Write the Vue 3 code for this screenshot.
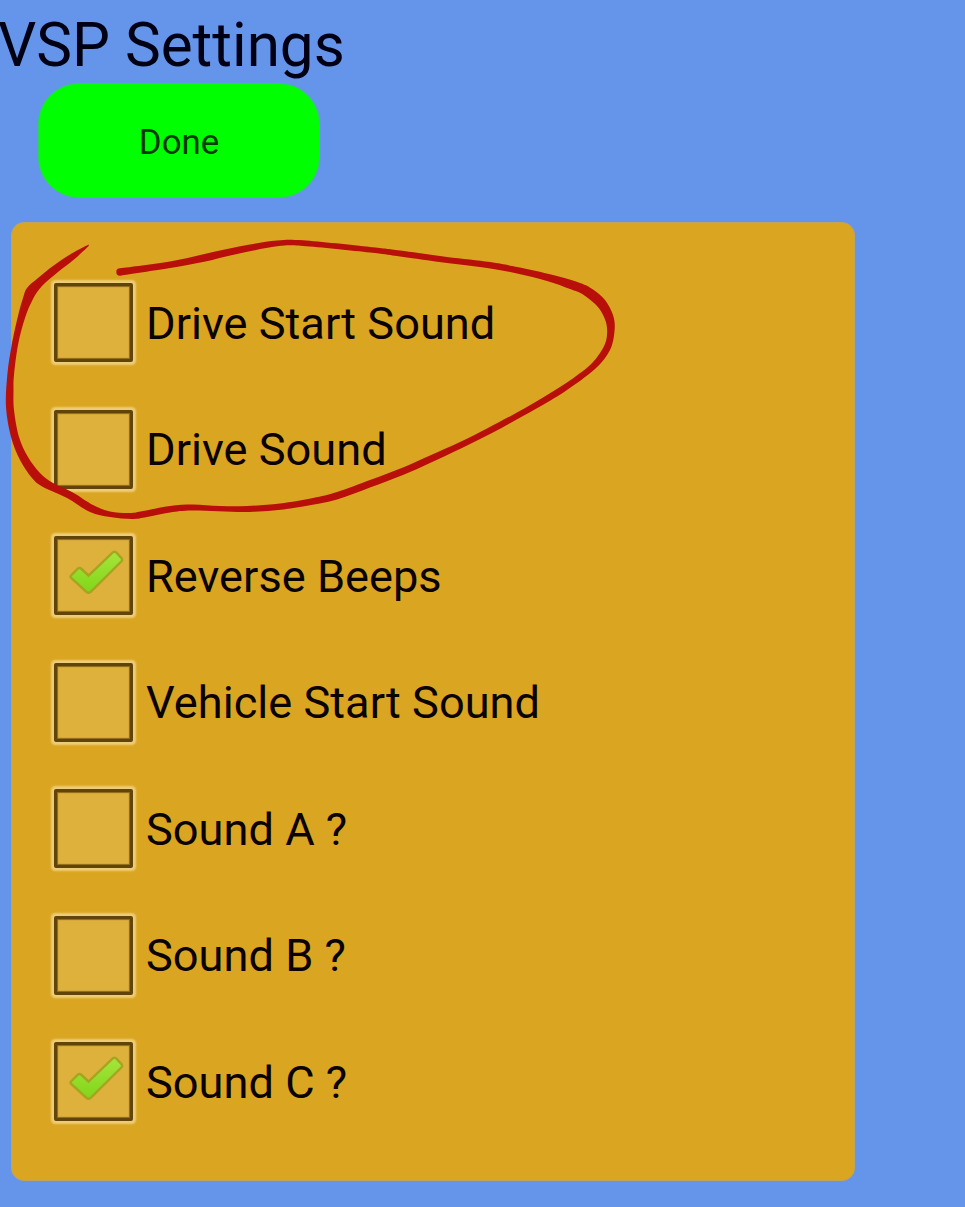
<script setup>
import { ref } from 'vue'

const options = ref([
  { label: 'Drive Start Sound', on: false },
  { label: 'Drive Sound', on: false },
  { label: 'Reverse Beeps', on: true },
  { label: 'Vehicle Start Sound', on: false },
  { label: 'Sound A ?', on: false },
  { label: 'Sound B ?', on: false },
  { label: 'Sound C ?', on: true },
])

// The two edges of the hand-drawn marker loop, from its thin tail to its round end.
const outer = [
  [88.7, 244.5], [71.7, 253.5], [53, 266], [38, 278], [27, 288], [23, 298], [18, 316], [11.7, 345], [7.3, 375],
  [6, 407], [11, 437], [20, 460], [32, 478], [43, 487], [67, 498], [90, 512], [110, 517], [132, 519],
  [147, 517], [170, 512.5], [193, 510.5], [243, 512], [273, 510.5], [303, 506.5], [337, 499.5], [370, 487.5],
  [403, 475], [430, 463], [462, 448], [493, 432.5], [523, 416], [547, 402.5], [567, 390], [595, 369],
  [610, 350], [614.6, 330], [613, 315], [605, 300], [593, 289.5], [580, 283], [553, 275], [517, 267],
  [490, 262], [447, 257], [400, 250.5], [370, 247], [303, 240.3], [277, 240.5], [247, 245], [213, 252],
  [170, 261.5], [120, 268.3],
]
const inner = [
  [120, 275.7], [170, 268], [203, 262], [237, 254], [277, 246.3], [303, 246], [370, 252.5], [400, 256.5],
  [447, 263], [487, 268], [517, 273.5], [547, 281], [570, 289], [583, 294.5], [597, 306], [604, 317],
  [607, 328], [606, 341], [600, 353], [589, 366], [567, 382.5], [543, 397.5], [517, 412.5], [487, 428.5],
  [460, 442], [430, 455.5], [403, 467.5], [370, 480], [337, 492], [313, 498], [280, 503.5], [247, 506],
  [220, 506], [193, 504.5], [170, 506], [143, 511], [130, 513], [110, 511.5], [93, 505], [72, 492],
  [53, 483], [40, 473], [28, 457], [19, 437], [14, 410], [13.5, 390], [14, 375], [18, 345], [25, 318],
  [33, 299], [42, 286], [58, 272], [74, 259.5], [88.7, 246],
]

function curve(points) {
  let d = ''
  for (let i = 0; i < points.length - 1; i++) {
    const a = points[i - 1] || points[i]
    const b = points[i]
    const c = points[i + 1]
    const e = points[i + 2] || c
    d += ` C${b[0] + (c[0] - a[0]) / 6} ${b[1] + (c[1] - a[1]) / 6} ${c[0] - (e[0] - b[0]) / 6} ${c[1] - (e[1] - b[1]) / 6} ${c[0]} ${c[1]}`
  }
  return d
}
const loop = `M${outer[0]}${curve(outer)} A3.7 3.7 0 0 0 ${inner[0]}${curve(inner)}Z`
</script>

<template>
  <main class="screen">
    <h1 class="title">VSP Settings</h1>
    <button class="done" type="button">Done</button>
    <section class="panel">
      <label v-for="option in options" :key="option.label" class="option">
        <input v-model="option.on" class="native" type="checkbox" />
        <span class="box">
          <svg v-if="option.on" class="check" viewBox="0 0 56 46">
            <defs>
              <linearGradient id="leaf" x1="0" y1="0" x2="0" y2="1">
                <stop offset="0" stop-color="#a6e43c" />
                <stop offset="1" stop-color="#80d618" />
              </linearGradient>
            </defs>
            <path
              d="M3 25.5 L10 18.5 Q11.5 17.5 13 18.5 L20.5 25.5 L45 2.2 Q46.5 1.3 48 2.2 L53.8 8.5 Q54.6 10 53.5 11.3 L22.5 42 Q20.5 43.4 18.5 42 L3.2 28 Q2 26.8 3 25.5Z"
              fill="url(#leaf)" stroke="#a5a51f" stroke-width="2.4"
            />
          </svg>
        </span>
        <span class="text">{{ option.label }}</span>
      </label>
    </section>
    <svg class="marker" viewBox="0 0 965 1207"><path :d="loop" fill="#b80f0b" /></svg>
  </main>
</template>

<style>
body {
  margin: 0;
  background: #6495ea;
}
</style>

<style scoped>
.screen {
  position: relative;
  box-sizing: border-box;
  width: 965px;
  height: 1207px;
  overflow: hidden;
  background: #6495ea;
  font-family: Roboto, sans-serif;
}
.title {
  margin: 0 0 0 -2px;
  height: 83px;
  font-size: 60.2px;
  font-weight: 400;
  line-height: 92px;
  color: #000014;
  white-space: nowrap;
}
.done {
  display: block;
  width: 282px;
  height: 115px;
  margin: 0 0 0 38px;
  padding: 2px 0 0;
  border: 1px solid #2fd45c;
  border-radius: 41px;
  background: #00ff00;
  color: #033b03;
  font-family: inherit;
  font-size: 34.8px;
}
.panel {
  box-sizing: border-box;
  display: grid;
  grid-template-rows: repeat(7, 1fr);
  width: 844px;
  height: 959px;
  margin: 24px 0 0 11px;
  padding: 36.5px 40px 35px;
  border: 1px solid #bfa558;
  border-radius: 13px;
  background: #daa521;
}
.option {
  display: flex;
  align-items: center;
  gap: 13px;
}
.native {
  position: absolute;
  opacity: 0;
}
.box {
  box-sizing: border-box;
  display: flex;
  align-items: center;
  justify-content: center;
  width: 79px;
  height: 79px;
  margin-left: 2px;
  border: 3px solid #60440a;
  border-radius: 2px;
  background: #deb03c;
  box-shadow: 0 0 2px 2.5px #efcd78, inset 0 0 1px 1px #8b681a;
}
.check {
  width: 56px;
  height: 46px;
  flex: none;
  margin: 0 0 5px 4px;
}
.text {
  padding-top: 2px;
  font-size: 45.2px;
  line-height: 54px;
  color: #0a0300;
  white-space: nowrap;
}
.marker {
  position: absolute;
  inset: 0;
  width: 965px;
  height: 1207px;
  pointer-events: none;
}
</style>
